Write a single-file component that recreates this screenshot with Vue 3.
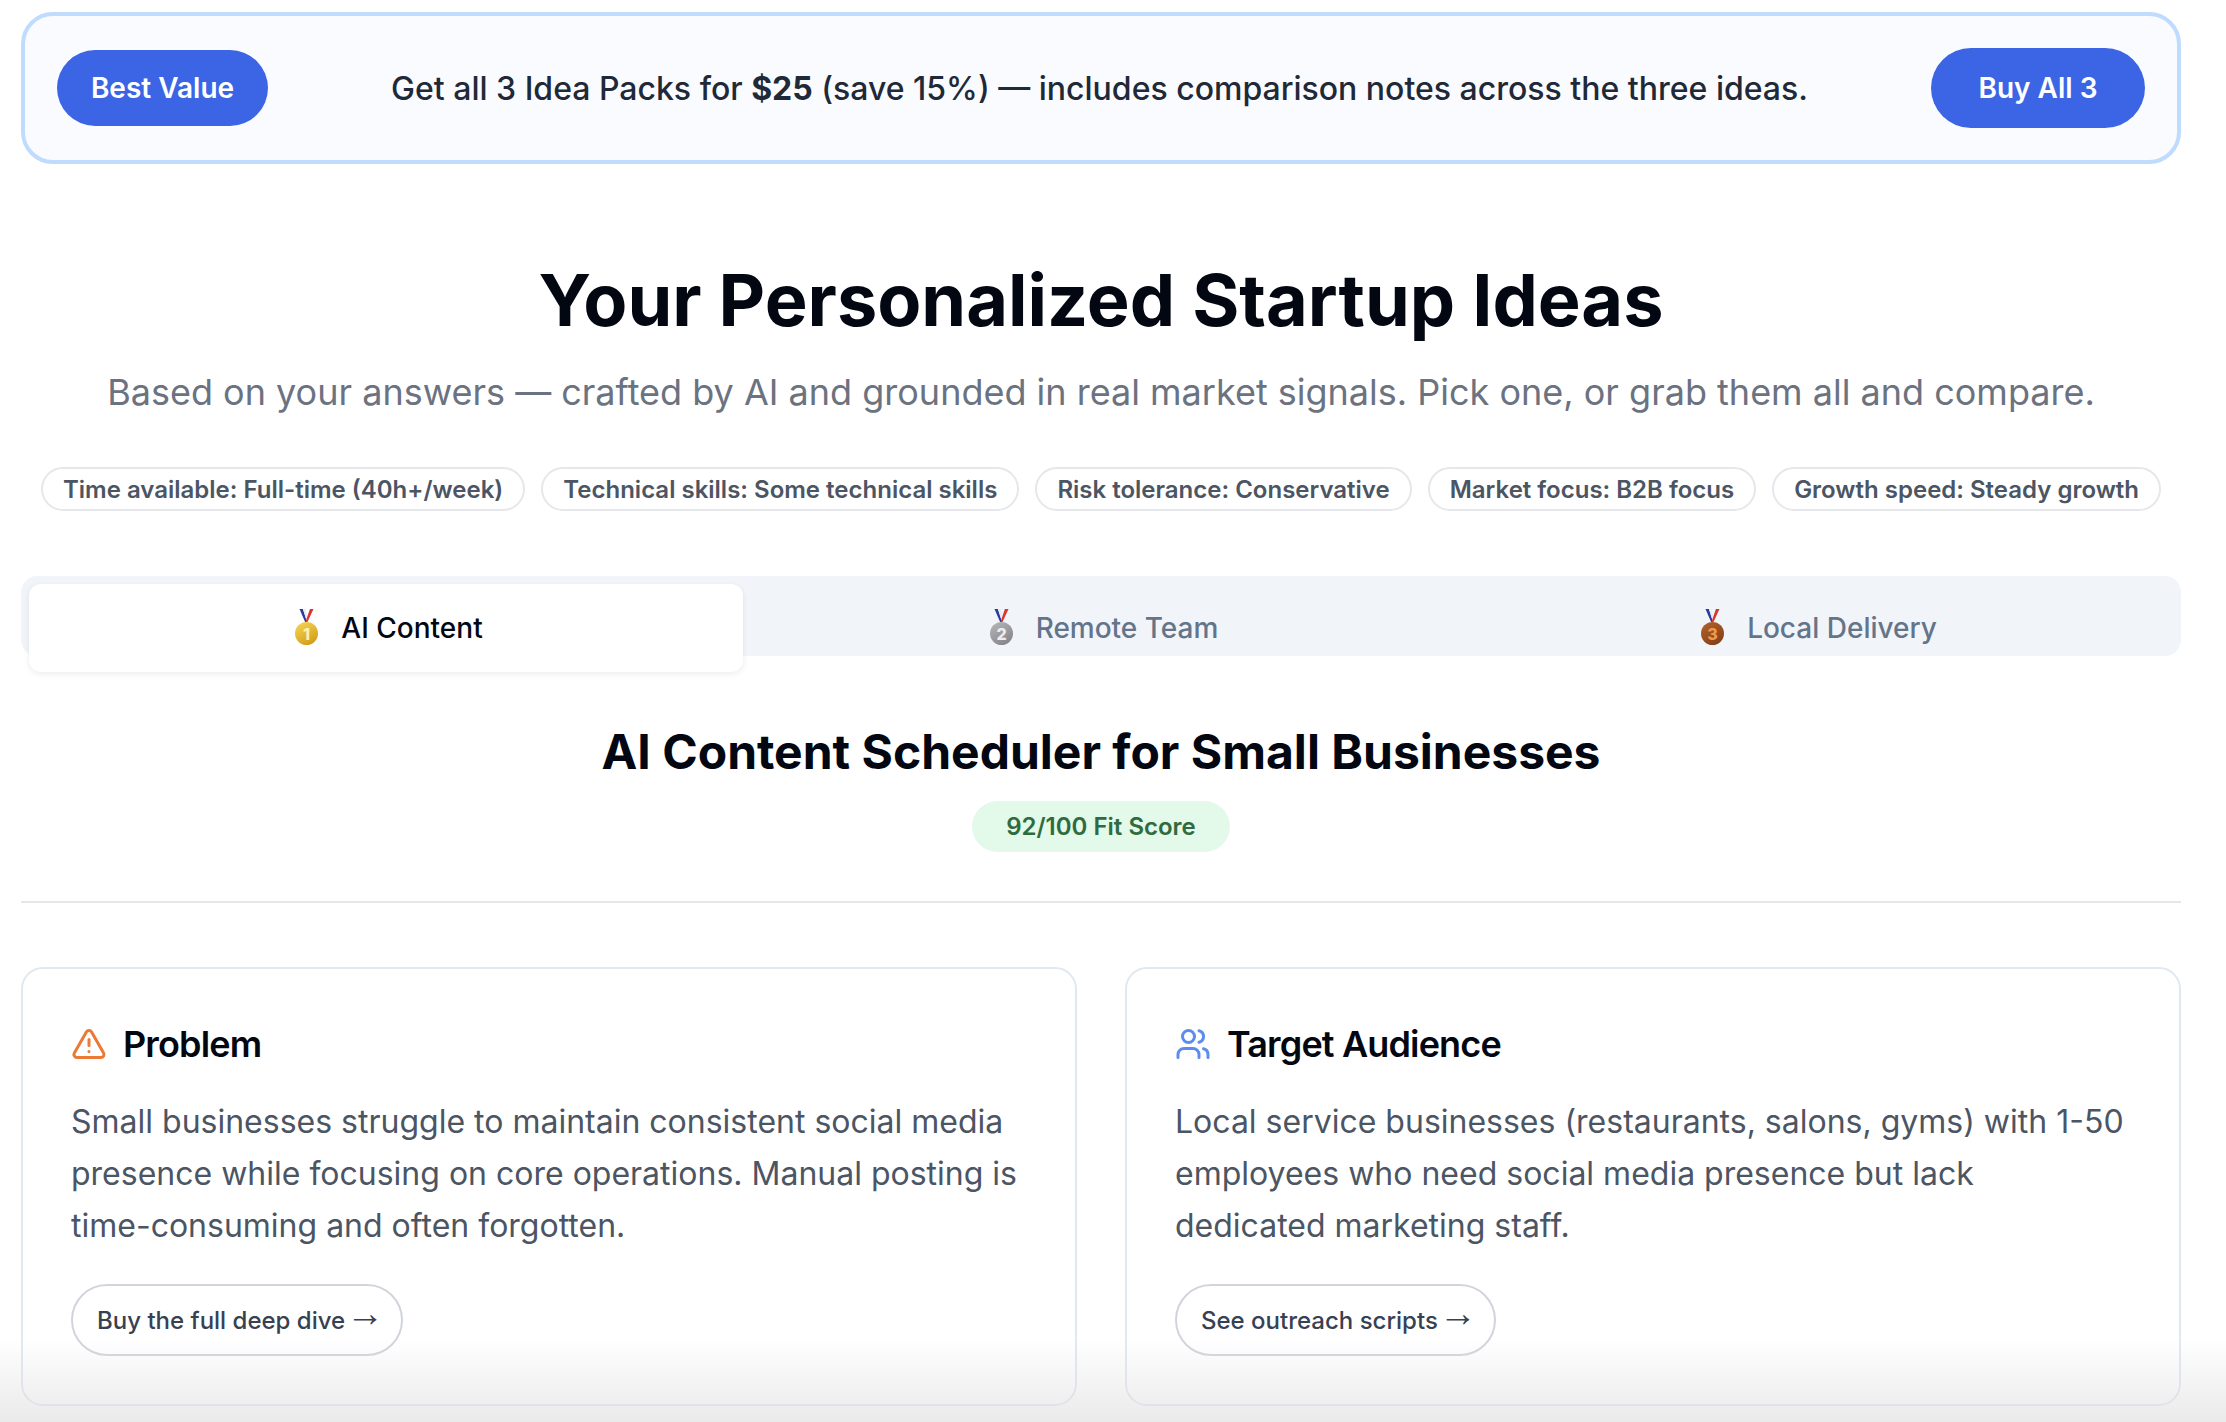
<script setup>
const chips = [
  'Time available: Full-time (40h+/week)',
  'Technical skills: Some technical skills',
  'Risk tolerance: Conservative',
  'Market focus: B2B focus',
  'Growth speed: Steady growth'
]
const tabs = [
  { label: 'AI Content', n: '1', light: '#f5d451', dark: '#cf9a17', num: '#fbeeb0', active: true },
  { label: 'Remote Team', n: '2', light: '#b4b4b8', dark: '#828287', num: '#ececee', active: false },
  { label: 'Local Delivery', n: '3', light: '#b2602a', dark: '#823e17', num: '#eb9a4e', active: false }
]
</script>

<template>
  <div class="page">
    <section class="banner">
      <span class="badge">Best Value</span>
      <p class="offer">Get all 3 Idea Packs for <strong>$25</strong> (save 15%) — includes comparison notes across the three ideas.</p>
      <button class="buy">Buy All 3</button>
    </section>

    <header class="hero">
      <h1>Your Personalized Startup Ideas</h1>
      <p>Based on your answers — crafted by AI and grounded in real market signals. Pick one, or grab them all and compare.</p>
    </header>

    <div class="chips">
      <span v-for="c in chips" :key="c" class="chip">{{ c }}</span>
    </div>

    <nav class="tabs">
      <div v-for="t in tabs" :key="t.label" class="tab" :class="{ active: t.active }">
        <svg class="medal" viewBox="0 0 24 36" width="25" height="36">
          <defs>
            <linearGradient :id="'disc' + t.n" x1="0.2" y1="0" x2="0.8" y2="1">
              <stop offset="0" :stop-color="t.light" />
              <stop offset="1" :stop-color="t.dark" />
            </linearGradient>
          </defs>
          <path d="M5 0h3.4l4.2 13h-2z" fill="#2b3a9e" />
          <path d="M8.4 0h2.4l2.4 9-1 3z" fill="#e9ebf3" />
          <path d="M19 0h-3.6l-4.4 13h2z" fill="#d9362f" />
          <circle cx="12" cy="24.5" r="11.5" :fill="'url(#disc' + t.n + ')'" />
          <text x="12" y="30.5" class="medal-num" :fill="t.num">{{ t.n }}</text>
        </svg>
        <span>{{ t.label }}</span>
      </div>
    </nav>

    <section class="idea">
      <h2>AI Content Scheduler for Small Businesses</h2>
      <span class="score">92/100 Fit Score</span>
    </section>

    <div class="cards">
      <article class="card">
        <h3>
          <svg class="icon" viewBox="0 0 24 24" width="36" height="36" fill="none" stroke="#ea7a35" stroke-width="2" stroke-linecap="round" stroke-linejoin="round">
            <path d="m21.73 18-8-14a2 2 0 0 0-3.48 0l-8 14A2 2 0 0 0 4 21h16a2 2 0 0 0 1.73-3Z" />
            <path d="M12 9v4" />
            <path d="M12 17h.01" />
          </svg>
          Problem
        </h3>
        <p>Small businesses struggle to maintain consistent social media presence while focusing on core operations. Manual posting is time-consuming and often forgotten.</p>
        <button class="ghost">Buy the full deep dive <span class="arrow">→</span></button>
      </article>
      <article class="card">
        <h3>
          <svg class="icon" viewBox="0 0 24 24" width="36" height="36" fill="none" stroke="#5b8def" stroke-width="2" stroke-linecap="round" stroke-linejoin="round">
            <path d="M16 21v-2a4 4 0 0 0-4-4H6a4 4 0 0 0-4 4v2" />
            <circle cx="9" cy="7" r="4" />
            <path d="M22 21v-2a4 4 0 0 0-3-3.87" />
            <path d="M16 3.13a4 4 0 0 1 0 7.75" />
          </svg>
          Target Audience
        </h3>
        <p>Local service businesses (restaurants, salons, gyms) with 1-50 employees who need social media presence but lack dedicated marketing staff.</p>
        <button class="ghost">See outreach scripts <span class="arrow">→</span></button>
      </article>
    </div>

    <div class="fade"></div>
  </div>
</template>

<style>
html, body { margin: 0; overflow: hidden; background: #fff; }
</style>

<style scoped>
.page {
  position: relative;
  box-sizing: border-box;
  height: 1422px;
  overflow: hidden;
  padding: 12px 45px 0 21px;
  font-family: Inter, "Noto Sans", sans-serif;
  background: #fff;
}
.banner {
  display: flex;
  align-items: center;
  justify-content: space-between;
  box-sizing: border-box;
  height: 152px;
  padding: 0 32px;
  border: 4px solid #bfdbfe;
  border-radius: 32px;
  background: #fafbff;
}
.badge {
  display: flex;
  align-items: center;
  justify-content: center;
  width: 211px;
  height: 76px;
  border-radius: 38px;
  background: #3b65e5;
  color: #fff;
  font-size: 28px;
  font-weight: 600;
}
.offer {
  margin: 0;
  font-size: 32px;
  font-weight: 500;
  color: #1f2937;
}
.offer strong { font-weight: 700; }
.buy {
  width: 214px;
  height: 80px;
  border: 0;
  border-radius: 40px;
  background: #3b65e5;
  color: #fff;
  font: 600 28px Inter, sans-serif;
}
.hero { text-align: center; margin-top: 92px; }
.hero h1 {
  margin: 0;
  font-size: 72px;
  line-height: 88px;
  font-weight: 700;
  color: #030712;
}
.hero p {
  margin: 23px 0 0;
  font-size: 36px;
  line-height: 50px;
  color: #6b7280;
}
.chips {
  display: flex;
  justify-content: center;
  gap: 16px;
  margin-top: 50px;
}
.chip {
  display: flex;
  align-items: center;
  height: 44px;
  box-sizing: border-box;
  padding: 0 20px;
  border: 2px solid #e5e7eb;
  border-radius: 22px;
  font-size: 24px;
  font-weight: 600;
  color: #4b5563;
  white-space: nowrap;
}
.tabs {
  display: grid;
  grid-template-columns: repeat(3, 1fr);
  gap: 1px;
  box-sizing: border-box;
  height: 80px;
  margin-top: 65px;
  padding: 8px;
  border-radius: 16px;
  background: #f1f5f9;
}
.tab {
  display: flex;
  align-items: flex-start;
  justify-content: center;
  gap: 22px;
  height: 88px;
  box-sizing: border-box;
  padding: 25px 0 0 5px;
  font-size: 28px;
  font-weight: 500;
  line-height: 38px;
  color: #64748b;
  border-radius: 12px;
}
.tab.active {
  background: #fff;
  color: #030712;
  box-shadow: 0 2px 6px rgba(15, 23, 42, .08);
}
.medal-num { font: 800 16px Inter, sans-serif; text-anchor: middle; }
.idea { display: flex; flex-direction: column; align-items: center; margin-top: 66px; padding-bottom: 49px; border-bottom: 2px solid #e5e7eb; }
.idea h2 { margin: 0; font-size: 48px; line-height: 60px; font-weight: 700; color: #030712; }
.score {
  display: flex;
  align-items: center;
  height: 51px;
  margin-top: 19px;
  padding: 0 34px;
  border-radius: 26px;
  background: #e3f9e9;
  color: #2e6b3e;
  font-size: 24px;
  font-weight: 600;
}
.cards { display: grid; grid-template-columns: 1fr 1fr; gap: 48px; margin-top: 64px; }
.card {
  height: 439px;
  box-sizing: border-box;
  padding: 53px 48px 0;
  border: 2px solid #e2e8f0;
  border-radius: 22px;
  background: #fff;
}
.card h3 {
  display: flex;
  align-items: center;
  gap: 16px;
  margin: 0;
  font-size: 36px;
  line-height: 44px;
  letter-spacing: -0.85px;
  font-weight: 600;
  color: #030712;
}
.card p {
  margin: 30px 0 0;
  font-size: 32px;
  line-height: 52px;
  color: #4b5563;
}
.ghost {
  display: block;
  width: fit-content;
  height: 72px;
  margin-top: 32px;
  padding: 0 24px;
  border: 2px solid #d1d5db;
  border-radius: 36px;
  background: #fff;
  color: #374151;
  font: 500 24px Inter, sans-serif;
  white-space: nowrap;
}
.arrow {
  font-family: "Liberation Sans", sans-serif;
  font-size: 38px;
  line-height: 0;
  margin: 0 -7px 0 -5.5px;
  vertical-align: 3px;
}
.fade {
  position: absolute;
  left: 0;
  right: 0;
  bottom: 0;
  height: 84px;
  background: linear-gradient(to bottom, rgba(220,220,222,0), rgba(220,220,222,.6));
  pointer-events: none;
}
</style>
